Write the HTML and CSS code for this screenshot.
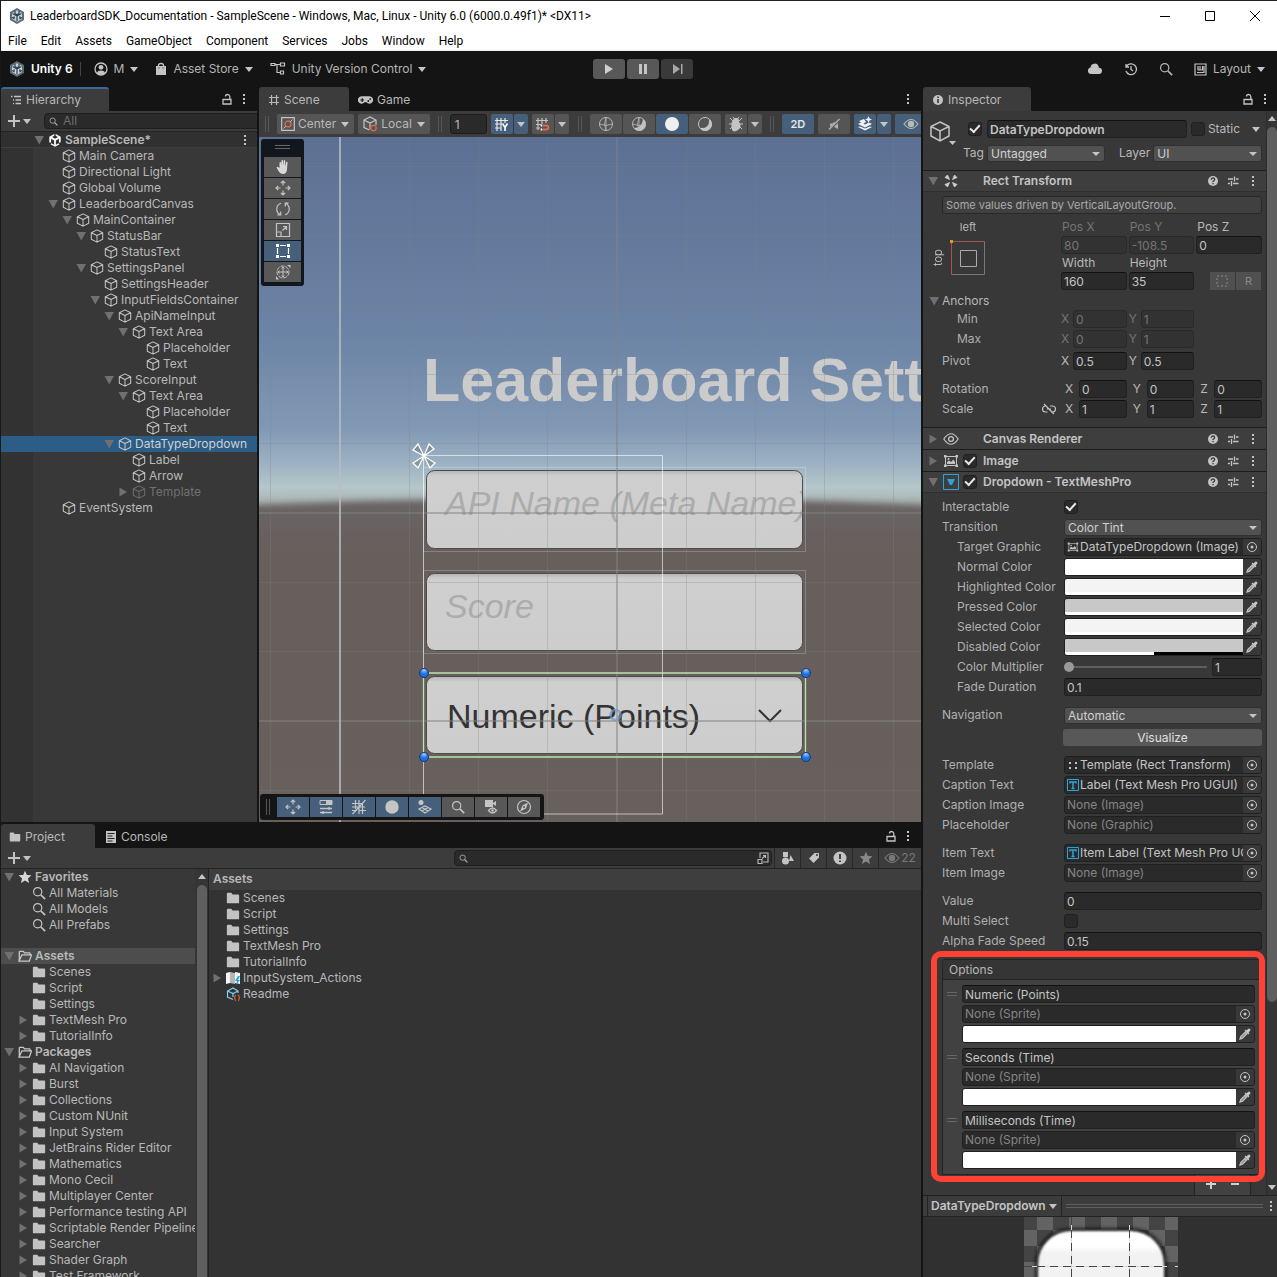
FILE: index.html
```html
<!DOCTYPE html>
<html lang="en">
<head>
<meta charset="utf-8">
<meta name="viewport" content="width=device-width, initial-scale=1">
<title>LeaderboardSDK_Documentation - SampleScene</title>
<link rel="stylesheet" href="styles.css">
</head>
<body>
<svg class="defs" aria-hidden="true">
  <symbol id="unity" viewBox="0 0 16 16"><path d="M8 0l7 4v8l-7 4-7-4V4z" fill="#5d6b77"/><path d="M8 2.200l5 2.900v5.800L8 13.800l-5-2.900V5.100z" fill="#c9d3da"/><path d="M8 8v5M8 8L3.600 5.500M8 8l4.400-2.500M6 3v2.500L8 6.700l2-1.200V3M3 9.500l2 1 .3-2.200M13 9.500l-2 1-.3-2.200" fill="none" stroke="#33404c" stroke-width="1.200"/></symbol>
  <symbol id="scene" viewBox="0 0 16 16"><path d="M8.800 1l5.700 3.200v6.600h-2V6.700L9 8.600v4.700l3-1.700 1.200 1.200L8 15.700l-5.200-2.900L4 11.600l3 1.700V8.600L3.500 6.700v4.100h-2V4.200L7.200 1v2.200L4.700 4.700 8 6.600l3.300-1.900-2.500-1.500z" fill="#fff"/></symbol>
  <symbol id="cube" viewBox="0 0 16 16"><path d="M8 1l6.500 3.200v7.600L8 15l-6.500-3.200V4.200zM1.500 4.200L8 7.400l6.500-3.200M8 7.400V15" fill="none" stroke="currentColor" stroke-width="1.200" stroke-linejoin="round"/></symbol>
  <symbol id="down" viewBox="0 0 8 8"><path d="M0 2h8L4 7z" fill="currentColor"/></symbol>
  <symbol id="tri-d" viewBox="0 0 12 12"><path d="M1.500 2h9.500L6.250 10.500z" fill="#707070"/></symbol>
  <symbol id="tri-r" viewBox="0 0 12 12"><path d="M2.500 1.500v9L10 6z" fill="#707070"/></symbol>
  <symbol id="folder" viewBox="0 0 16 16"><path d="M1 3q0-1 1-1h4l1.500 2H14q1 0 1 1v8q0 1-1 1H2q-1 0-1-1z" fill="#c2c2c2"/></symbol>
  <symbol id="folder-o" viewBox="0 0 16 16"><path d="M1.500 13V3.500q0-.8.8-.8H6l1.500 1.800H13q.8 0 .8.800V7" fill="none" stroke="#c8c8c8" stroke-width="1.500"/><path d="M1.200 13.800L4.500 6.800h11l-2.600 7z" fill="none" stroke="#c8c8c8" stroke-width="1.400"/></symbol>
  <symbol id="mag" viewBox="0 0 16 16"><circle cx="6.500" cy="6.500" r="4.700" fill="none" stroke="currentColor" stroke-width="1.400"/><path d="M10 10l5 5" stroke="currentColor" stroke-width="2"/></symbol>
  <symbol id="star" viewBox="0 0 16 16"><path d="M8 .8l2.100 4.900 5.300.4-4 3.500 1.200 5.200L8 12l-4.600 2.800 1.200-5.200-4-3.500 5.300-.4z" fill="currentColor"/></symbol>
  <symbol id="lock" viewBox="0 0 12 14"><path d="M2 7.500h8v4.500H2z" fill="none" stroke="#c4c4c4" stroke-width="1.300"/><path d="M4.500 4.500Q4.500 2.500 6.500 2.500T8.800 4.500V7.500" fill="none" stroke="#c4c4c4" stroke-width="1.300"/></symbol>
  <symbol id="dots" viewBox="0 0 4 14"><path d="M1 2h2v2H1zM1 6h2v2H1zM1 10h2v2H1z" fill="#c4c4c4"/></symbol>
  <symbol id="plus" viewBox="0 0 12 12"><path d="M6 0v12M0 6h12" stroke="#c4c4c4" stroke-width="2"/></symbol>
  <symbol id="hier" viewBox="0 0 12 12"><path d="M1 2.500h1.500M4 2.500h7M3 6h1M5.500 6H11M3 9.500h1M5.500 9.500H11" stroke="#c4c4c4" stroke-width="1.300"/></symbol>
  <symbol id="hash" viewBox="0 0 12 12"><path d="M1 3.500h10M1 8.500h10M3.500 1v10M8.500 1v10" stroke="currentColor" stroke-width="1.200"/></symbol>
  <symbol id="pad" viewBox="0 0 16 12"><path d="M4 2h8a4 4 0 1 1-3 6.500H7A4 4 0 1 1 4 2z" fill="#c4c4c4"/><path d="M2.500 6h4M4.500 4v4" stroke="#141414" stroke-width="1.200"/><circle cx="11" cy="7" r="1" fill="#141414"/><circle cx="13" cy="5" r="1" fill="#141414"/></symbol>
  <symbol id="popout" viewBox="0 0 12 12"><path d="M3 6V1h8v9H6M1 7.500h4v4H1zM5 6.500L8.500 3.500M6 3.500h2.500V6" fill="none" stroke="currentColor" stroke-width="1.100"/></symbol>
  <symbol id="help" viewBox="0 0 12 12"><circle cx="6" cy="6" r="5" fill="#c4c4c4"/><path d="M4.300 4.700Q4.300 3 6 3t1.700 1.600Q7.700 5.500 6 6.300V7" fill="none" stroke="#3e3e3e" stroke-width="1.300"/><path d="M5.300 8h1.400v1.300H5.300z" fill="#3e3e3e"/></symbol>
  <symbol id="preset" viewBox="0 0 12 12"><path d="M1 4h5M9 4h2.500M1 8.500h2M6 8.500h5.500M7.500 1.500v5M4.500 6v5" stroke="#c4c4c4" stroke-width="1.300"/></symbol>
  <symbol id="target" viewBox="0 0 12 12"><circle cx="6" cy="6" r="4.500" fill="none" stroke="#c4c4c4"/><circle cx="6" cy="6" r="1.500" fill="#c4c4c4"/></symbol>
  <symbol id="drop" viewBox="0 0 12 12"><path d="M1 11l.8-2.500L6 4.300l1.700 1.700L3.500 10.200z" fill="#8a8a8a" stroke="#c4c4c4" stroke-width="1.200"/><path d="M5.500 2.800l3.700 3.700 1.200-1.200-.8-.8 1.600-1.700q.6-1-.2-1.900t-1.800-.2L7.500 2.400l-.8-.8z" fill="#c8c8c8"/></symbol>
  <symbol id="rect-tf" viewBox="0 0 14 14"><path d="M3.500 1L5.500 5.500 1 3.500zM10.500 1L8.500 5.500 13 3.500zM3.500 13L5.500 8.500 1 10.500zM10.500 13L8.500 8.500 13 10.500z" fill="#d0d0d0" stroke="#d0d0d0" stroke-width=".8"/></symbol>
  <symbol id="eye" viewBox="0 0 16 12"><path d="M.8 6q7.200-10.500 14.400 0-7.200 10.500-14.400 0z" fill="none" stroke="currentColor" stroke-width="1.200"/><circle cx="8" cy="6" r="2.400" fill="none" stroke="currentColor" stroke-width="1.300"/></symbol>
  <symbol id="eye-f" viewBox="0 0 16 12"><path d="M1 6q7-9 14 0-7 9-14 0z" fill="none" stroke="currentColor" stroke-width="1.200"/><circle cx="8" cy="6" r="3.200" fill="currentColor"/></symbol>
  <symbol id="image" viewBox="0 0 16 14"><path d="M3 2.500h10M3 11.500h10M2.500 3v8M13.500 3v8" stroke="#c4c4c4"/><path d="M1 1h2.500v2.500H1zM12.500 1H15v2.500h-2.500zM1 10.500h2.500V13H1zM12.500 10.500H15V13h-2.500zM4 10V8l2-1.500L8 8l2.500-2.500L12 8v2z" fill="#c4c4c4"/><circle cx="5.500" cy="5" r="1" fill="#c4c4c4"/></symbol>
  <symbol id="tmp-t" viewBox="0 0 12 14"><path d="M.5 1.500h11v11H.5z" fill="none" stroke="#28a6dc"/><path d="M3 5.500V4h6v1.500M6 4v6.500M4.500 10.500h3" fill="none" stroke="#28a6dc" stroke-width="1.500"/></symbol>
  <symbol id="move" viewBox="0 0 16 16"><path d="M8 1v4.500M8 10.500V15M1 8h4.500M10.500 8H15M5.800 3.200L8 1l2.200 2.200M5.800 12.800L8 15l2.200-2.200M3.200 5.800L1 8l2.200 2.200M12.800 5.800L15 8l-2.200 2.200" fill="none" stroke="currentColor" stroke-width="1.200"/></symbol>
  <symbol id="globe" viewBox="0 0 16 16"><circle cx="8" cy="8" r="6.500" fill="none" stroke="currentColor"/><path d="M1.500 8q6.500 3 13 0M8 1.500q-3 6.500 0 13M8 1.500v13" fill="none" stroke="currentColor" stroke-width=".8"/></symbol>
</svg>

<header class="titlebar">
  <svg width="16" height="16"><use href="#unity"/></svg>
  <h1>LeaderboardSDK_Documentation - SampleScene - Windows, Mac, Linux - Unity 6.0 (6000.0.49f1)* &lt;DX11&gt;</h1>
  <button aria-label="Minimize"><svg width="10" height="10"><path d="M0 5.500h10" stroke="#000"/></svg></button>
  <button aria-label="Maximize"><svg width="10" height="10"><path d="M.5.500h9v9h-9z" fill="none" stroke="#000"/></svg></button>
  <button aria-label="Close"><svg width="10" height="10"><path d="M0 0l10 10M10 0L0 10" stroke="#000"/></svg></button>
</header>
<nav class="menubar"><button>File</button><button>Edit</button><button>Assets</button><button>GameObject</button><button>Component</button><button>Services</button><button>Jobs</button><button>Window</button><button>Help</button></nav>

<div class="topbar">
  <div class="top-left">
    <span class="brand"><svg width="16" height="18"><use href="#unity"/></svg>Unity 6</span>
    <button class="flat"><svg width="14" height="14" viewBox="0 0 14 14"><circle cx="7" cy="7" r="6" fill="none" stroke="#c4c4c4" stroke-width="1.300"/><circle cx="7" cy="5.300" r="2.400" fill="#c4c4c4"/><path d="M3 11.500q0-3 4-3t4 3Q7 14.500 3 11.500z" fill="#c4c4c4"/></svg>M<svg class="caret"><use href="#down"/></svg></button>
    <button class="flat"><svg width="12" height="14" viewBox="0 0 12 14"><path d="M1 4h10v9H1z" fill="#c4c4c4"/><path d="M3.500 6V3.500Q3.500 1.500 6 1.500t2.500 2V6" fill="none" stroke="#c4c4c4" stroke-width="1.300"/><path d="M4 5.500v1M8 5.500v1" stroke="#222"/></svg>Asset Store<svg class="caret"><use href="#down"/></svg></button>
    <button class="flat"><svg width="16" height="14" viewBox="0 0 16 14"><path d="M1 1.500h4v2H1zM10.500 1h4v3h-4zM10.500 9h3v3h-3z" fill="none" stroke="#c4c4c4" stroke-width="1.200"/><path d="M5 2.500h5M7 2.500V10.500h3" fill="none" stroke="#c4c4c4" stroke-width="1.200"/></svg>Unity Version Control<svg class="caret"><use href="#down"/></svg></button>
  </div>
  <div class="play">
    <button aria-label="Play"><svg width="10" height="12"><path d="M1 1v10l8-5z" fill="#d0d0d0"/></svg></button>
    <button aria-label="Pause"><svg width="10" height="12"><path d="M1 1h3v10H1zM6 1h3v10H6z" fill="#c4c4c4"/></svg></button>
    <button aria-label="Step" disabled><svg width="11" height="12"><path d="M1 1v10l7-5zM9 1h1.500v10H9z" fill="#a8a8a8"/></svg></button>
  </div>
  <div class="top-right">
    <button class="flat" aria-label="Cloud"><svg width="16" height="14" viewBox="0 0 16 14"><path d="M4 12a3.300 3.300 0 0 1-.5-6.500A4.200 4.200 0 0 1 11.500 4q.5 1 .3 1.800A3.100 3.100 0 0 1 12 12z" fill="#c4c4c4"/></svg></button>
    <button class="flat" aria-label="Undo history"><svg width="14" height="14" viewBox="0 0 14 14"><path d="M2 2v3h3M2.300 4.700A5.400 5.400 0 1 1 2 9M7 4v3.500L9 9" fill="none" stroke="#c4c4c4" stroke-width="1.300"/></svg></button>
    <button class="flat" aria-label="Search"><svg width="14" height="14"><use href="#mag"/></svg></button>
    <button class="flat"><svg width="13" height="13" viewBox="0 0 13 13"><path d="M1 1h11v11H1zM4 3v4M6 3v4M8.500 3v4M3.500 7h5.500M3 9.500h7M10 3v7" fill="none" stroke="#c4c4c4" stroke-width="1.200"/></svg>Layout<svg class="caret"><use href="#down"/></svg></button>
  </div>
</div>

<main class="editor">
  <section class="work">
    <div class="upper">
      <section class="panel hierarchy" aria-label="Hierarchy">
        <div class="tabs">
          <button class="tab active focus w108"><svg width="12" height="12"><use href="#hier"/></svg>Hierarchy</button>
          <span class="tab-tools"><svg width="12" height="14"><use href="#lock"/></svg><svg width="4" height="14"><use href="#dots"/></svg></span>
        </div>
        <div class="toolbar">
          <button class="add" aria-label="Create"><svg width="12" height="12"><use href="#plus"/></svg><svg class="caret"><use href="#down"/></svg></button>
          <label class="search"><svg width="9" height="9"><use href="#mag"/></svg><input type="text" placeholder="All" aria-label="Search hierarchy"><svg width="12" height="12"><use href="#popout"/></svg></label>
        </div>
        <ul class="tree">
          <li class="d0 root"><svg class="tw"><use href="#tri-d"/></svg><svg class="ic"><use href="#scene"/></svg><b>SampleScene*</b><svg class="end" width="4" height="14"><use href="#dots"/></svg></li>
          <li class="d1"><i class="tw"></i><svg class="ic"><use href="#cube"/></svg>Main Camera</li>
          <li class="d1"><i class="tw"></i><svg class="ic"><use href="#cube"/></svg>Directional Light</li>
          <li class="d1"><i class="tw"></i><svg class="ic"><use href="#cube"/></svg>Global Volume</li>
          <li class="d1"><svg class="tw"><use href="#tri-d"/></svg><svg class="ic"><use href="#cube"/></svg>LeaderboardCanvas</li>
          <li class="d2"><svg class="tw"><use href="#tri-d"/></svg><svg class="ic"><use href="#cube"/></svg>MainContainer</li>
          <li class="d3"><svg class="tw"><use href="#tri-d"/></svg><svg class="ic"><use href="#cube"/></svg>StatusBar</li>
          <li class="d4"><i class="tw"></i><svg class="ic"><use href="#cube"/></svg>StatusText</li>
          <li class="d3"><svg class="tw"><use href="#tri-d"/></svg><svg class="ic"><use href="#cube"/></svg>SettingsPanel</li>
          <li class="d4"><i class="tw"></i><svg class="ic"><use href="#cube"/></svg>SettingsHeader</li>
          <li class="d4"><svg class="tw"><use href="#tri-d"/></svg><svg class="ic"><use href="#cube"/></svg>InputFieldsContainer</li>
          <li class="d5"><svg class="tw"><use href="#tri-d"/></svg><svg class="ic"><use href="#cube"/></svg>ApiNameInput</li>
          <li class="d6"><svg class="tw"><use href="#tri-d"/></svg><svg class="ic"><use href="#cube"/></svg>Text Area</li>
          <li class="d7"><i class="tw"></i><svg class="ic"><use href="#cube"/></svg>Placeholder</li>
          <li class="d7"><i class="tw"></i><svg class="ic"><use href="#cube"/></svg>Text</li>
          <li class="d5"><svg class="tw"><use href="#tri-d"/></svg><svg class="ic"><use href="#cube"/></svg>ScoreInput</li>
          <li class="d6"><svg class="tw"><use href="#tri-d"/></svg><svg class="ic"><use href="#cube"/></svg>Text Area</li>
          <li class="d7"><i class="tw"></i><svg class="ic"><use href="#cube"/></svg>Placeholder</li>
          <li class="d7"><i class="tw"></i><svg class="ic"><use href="#cube"/></svg>Text</li>
          <li class="d5 selected"><svg class="tw"><use href="#tri-d"/></svg><svg class="ic"><use href="#cube"/></svg>DataTypeDropdown</li>
          <li class="d6"><i class="tw"></i><svg class="ic"><use href="#cube"/></svg>Label</li>
          <li class="d6"><i class="tw"></i><svg class="ic"><use href="#cube"/></svg>Arrow</li>
          <li class="d6 off"><svg class="tw"><use href="#tri-r"/></svg><svg class="ic"><use href="#cube"/></svg>Template</li>
          <li class="d1"><i class="tw"></i><svg class="ic"><use href="#cube"/></svg>EventSystem</li>
        </ul>
      </section>

      <section class="panel scene" aria-label="Scene">
        <div class="tabs">
          <button class="tab active w90"><svg width="12" height="12"><use href="#hash"/></svg>Scene</button>
          <button class="tab"><svg width="15" height="12"><use href="#pad"/></svg>Game</button>
          <span class="tab-tools"><svg width="4" height="14"><use href="#dots"/></svg></span>
        </div>
        <div class="scene-bar">
          <i class="grip"></i>
          <button class="tb"><svg width="14" height="14" viewBox="0 0 14 14"><path d="M.7.700h12.600v12.600H.7z" fill="none" stroke="#c4c4c4" stroke-width="1.200"/><circle cx="7" cy="7" r="3" fill="none" stroke="#d8694b" stroke-width="1.300"/><path d="M2.500 11.500L5 9M9 5l2.500-2.500" stroke="#c4c4c4"/></svg>Center<svg class="caret"><use href="#down"/></svg></button>
          <button class="tb"><svg width="16" height="16" viewBox="0 0 16 16"><path d="M7.500 14L2 11.500V4l6-3 6 3v5M2 4l6 3 6-3M8 7v6" fill="none" stroke="#c4c4c4" stroke-width="1.200"/><circle cx="11.500" cy="12" r="2.700" fill="none" stroke="#d8694b" stroke-width="1.300"/></svg>Local<svg class="caret"><use href="#down"/></svg></button>
          <i class="grip"></i>
          <input class="num" type="text" value="1" aria-label="Grid size">
          <span class="pair"><button class="tb on w22" aria-label="Grid"><svg width="15" height="15" viewBox="0 0 15 15"><path d="M1 3.500h13M1 7h7M1 11h6M3 1v13M7 1v13M11 1v5" stroke="#e8e8e8" stroke-width="1.200"/><path d="M8.500 6.500l2.500 4 2.500-4M11 10v4" fill="none" stroke="#fff" stroke-width="1.600"/></svg></button><button class="tb on w14" aria-label="Grid options"><svg class="caret"><use href="#down"/></svg></button></span>
          <span class="pair"><button class="tb w22" aria-label="Snap"><svg width="15" height="15" viewBox="0 0 15 15"><path d="M1 3.500h12M1 7.500h5M1 11h4M3 1v12M7 1v6M11 1v5" stroke="#c4c4c4" stroke-width="1.200"/><path d="M8 8.500h3q2.500 0 2.500 2t-2.500 2H8" fill="none" stroke="#e06a4a" stroke-width="1.800"/><path d="M6.500 7.500v2M6.500 11.500v2" stroke="#fff" stroke-width="1.600"/></svg></button><button class="tb w14" aria-label="Snap options"><svg class="caret"><use href="#down"/></svg></button></span>
          <i class="grip wide"></i>
          <span class="pair">
            <button class="tb w32" aria-label="Wireframe"><svg width="16" height="16"><use href="#globe"/></svg></button>
            <button class="tb w32" aria-label="Shaded wireframe"><svg width="16" height="16"><path d="M12 3a6.500 6.500 0 1 1-9 9q8 0 9-9z" fill="#c4c4c4"/><use href="#globe"/></svg></button>
            <button class="tb on w32" aria-label="Unlit"><svg width="16" height="16"><circle cx="8" cy="8" r="7" fill="#efefef"/></svg></button>
            <button class="tb w32" aria-label="Shaded"><svg width="16" height="16"><circle cx="8" cy="8" r="6.500" fill="none" stroke="#c4c4c4"/><path d="M12 3a6.500 6.500 0 1 1-9 9q10 1 9-9z" fill="#c4c4c4"/></svg></button>
          </span>
          <span class="pair"><button class="tb w22" aria-label="Debug draw"><svg width="16" height="16" viewBox="0 0 16 16"><path d="M5 5q0-3 3-3t3 3v1q1.500 1 1.500 4T8 15t-4.500-5T5 6z" fill="#c4c4c4"/><path d="M2 2l3 3M14 2l-3 3M1 8h14M2 13l3-3M14 13l-3-3M5 1l1.500 2M11 1L9.500 3" stroke="#c4c4c4"/></svg></button><button class="tb w14" aria-label="Debug options"><svg class="caret"><use href="#down"/></svg></button></span>
          <i class="grip"></i>
          <button class="tb on w32 two">2D</button>
          <button class="tb w32" aria-label="Audio"><svg width="14" height="14"><path d="M2 12.500L12.500 2" stroke="#b0b0b0" stroke-width="1.400"/><path d="M7 10l4-4v6zM3 6.500h2.500l2-2v2L4 9.500H3z" fill="#b0b0b0"/></svg></button>
          <span class="pair"><button class="tb on w22" aria-label="Effects"><svg width="16" height="16"><path d="M1 8l3-1.500 4 2 4-2L15 8l-7 3.500zM1 11l7 3.500 7-3.500-2-.5-5 2-5-2zM2 5l5-2 2 3-3 2zM11.500 0l1 2.500L15 3.500l-2.500 1-1 2.500-1-2.500-2.500-1 2.500-1z" fill="#f0f0f0"/></svg></button><button class="tb on w14" aria-label="Effects options"><svg class="caret"><use href="#down"/></svg></button></span>
          <button class="tb on w32" aria-label="Visibility"><svg width="16" height="12"><use href="#eye-f"/></svg></button>
        </div>

        <div class="viewport">
          <svg class="world" width="100%" height="100%" role="img" aria-label="Scene view">
            <defs>
              <linearGradient id="sky" gradientUnits="userSpaceOnUse" x1="0" y1="0" x2="0" y2="365">
                <stop offset="0" stop-color="#5c7093"/><stop offset=".55" stop-color="#6c84a5"/><stop offset=".8" stop-color="#8299b5"/><stop offset=".9" stop-color="#9eb3c4"/><stop offset=".96" stop-color="#b5c7ca"/><stop offset="1" stop-color="#a9b4b4"/>
              </linearGradient>
              <linearGradient id="ground" gradientUnits="userSpaceOnUse" x1="0" y1="360" x2="0" y2="685">
                <stop offset="0" stop-color="#6a6465"/><stop offset=".2" stop-color="#665f5b"/><stop offset="1" stop-color="#67605b"/>
              </linearGradient>
              <linearGradient id="box" x1="0" y1="0" x2="0" y2="1"><stop offset="0" stop-color="#b4b4b4"/><stop offset=".07" stop-color="#cfcfcf"/><stop offset="1" stop-color="#cdcdcd"/></linearGradient>
              <radialGradient id="knob" cx=".5" cy=".15" r=".8"><stop offset="0" stop-color="#a8ccff"/><stop offset=".6" stop-color="#1f6fe0"/></radialGradient>
              <filter id="soft" x="-5%" y="-5%" width="110%" height="110%"><feGaussianBlur stdDeviation="0 3"/></filter>
              <clipPath id="field"><path d="M168 334h375v77H168z"/></clipPath>
            </defs>
            <rect width="100%" height="100%" fill="url(#sky)"/>
            <path d="M-60 370Q331 352 722 370L4000 520V4000H-60z" fill="url(#ground)" filter="url(#soft)"/>
            <text class="heading" x="164" y="264">Leaderboard Sett</text>
            <g fill="url(#box)" stroke="#4c4a4a">
              <rect x="167.500" y="333.500" width="376" height="78" rx="8"/><rect x="167.500" y="436.500" width="376" height="77" rx="8"/><rect x="167.500" y="539.500" width="376" height="77" rx="8"/>
            </g>
            <g clip-path="url(#field)"><text class="hint" x="186" y="378">API Name (Meta Name)</text></g>
            <text class="hint" x="186" y="481">Score</text>
            <text class="value" x="188" y="591">Numeric (Points)</text>
            <path d="M500 573l11 11 11-11" fill="none" stroke="#333" stroke-width="2"/>
            <g stroke="#828282" stroke-opacity=".28">
              <path d="M11.500 0v685M150.500 0v685M219.500 0v685M288.500 0v685M427.500 0v685M496.500 0v685M565.500 0v685M634.500 0v685M0 29.500h3000M0 98.500h3000M0 168.500h3000M0 237.500h3000M0 306.500h3000M0 445.500h3000M0 514.500h3000M0 653.500h3000"/>
              <path d="M358 0v685M0 376h3000M0 584h3000" stroke-width="2" stroke-opacity=".5"/>
            </g>
            <path d="M81 0v4000" stroke="#b9bcc2" stroke-width="2" stroke-opacity=".8"/>
            <g fill="none" stroke="#fff">
              <path d="M164.500 318.500H403.500V677H164.500z" stroke-opacity=".6"/>
              <path d="M164.500 330.500h382v84h-382zM164.500 433.500h382v83h-382z" stroke-opacity=".22"/>
              <path d="M164.500 536h382v84h-382z" stroke="#b9e3b4" stroke-width="1.300"/>
            </g>
            <g fill="#6b6b6b" fill-opacity=".4" stroke="#fff" stroke-width="1.300"><path d="M165 319l-11-6 5-6zM165 319l5-12 5 5zM165 319l11 7-5 5zM165 319l-6 12-5-5z"/></g>
            <circle cx="356.500" cy="578" r="5" fill="none" stroke="#6f9ac4" stroke-width="2.500" stroke-opacity=".7"/>
            <g fill="url(#knob)" stroke="#17396b"><circle cx="165" cy="536" r="4.500"/><circle cx="547" cy="536" r="4.500"/><circle cx="165" cy="620" r="4.500"/><circle cx="547" cy="620" r="4.500"/></g>
          </svg>
          <div class="tools">
            <i class="bar"></i>
            <button aria-label="View"><svg width="16" height="16"><path d="M4.500 9V3.500q.7-1 1.500 0V7l.5-5.500q.8-.8 1.500 0V7l.7-5.500q.9-.8 1.500 0V7.500l1-4.500q.9-.6 1.400.2L12 10q0 5-4.500 5Q5 15 3.500 12L1.500 8.500q.6-1.200 1.800-.3z" fill="#d8d8d8"/></svg></button>
            <button aria-label="Move"><svg width="16" height="16"><use href="#move"/></svg></button>
            <button aria-label="Rotate"><svg width="16" height="16"><path d="M6 2.200A6 6 0 0 0 5.500 13.500M10 13.800A6 6 0 0 0 10.500 2.500M2.500 13.800h3.200v-3.300M13.500 2.200h-3.200v3.300" fill="none" stroke="currentColor" stroke-width="1.200"/></svg></button>
            <button aria-label="Scale"><svg width="16" height="16"><path d="M1.500 1.500h13v13h-13zM1.500 10h4.500v4.500M7.500 8.500l4-4M8 4.500h3.500V8" fill="none" stroke="currentColor" stroke-width="1.200"/></svg></button>
            <button class="on" aria-label="Rect"><svg width="16" height="16"><path d="M5 2.500h6M5 13.500h6M2.500 5v6M13.500 5v6" stroke="#fff" stroke-width="1.200"/><path d="M1 1h3v3H1zM12 1h3v3h-3zM1 12h3v3H1zM12 12h3v3h-3z" fill="#fff"/></svg></button>
            <button aria-label="Transform"><svg width="16" height="16"><circle cx="8" cy="8" r="6" fill="none" stroke="currentColor" stroke-dasharray="4 1"/><path d="M8 3v10M3 8h10M6.500 4.500L8 3l1.500 1.500M6.500 11.500L8 13l1.500-1.500M4.500 6.500L3 8l1.500 1.500M11.500 6.500L13 8l-1.500 1.500" fill="none" stroke="currentColor"/><path d="M12 1h3.500v3zM1 12v3.500h3z" fill="currentColor"/></svg></button>
          </div>
          <div class="dock">
            <i class="grip"></i>
            <button class="on" aria-label="Tools"><svg width="16" height="16"><use href="#move"/></svg></button>
            <button class="on" aria-label="Tool settings"><svg width="16" height="16"><path d="M2 1.500h12v4H2z" fill="none" stroke="currentColor"/><path d="M8 1h6v5H8z" fill="currentColor"/><path d="M2 9.500h12M2 13.500h12M11 8v3M5 12v3" stroke="currentColor" stroke-width="1.300"/></svg></button>
            <button class="on" aria-label="Grid and snap"><svg width="16" height="16"><path d="M1 4.500h10M1 8h13M1 11.500h5M8 11.500h7M4.500 1v9M8 1v14M11.500 4v11M1.500 15L14.500 1" stroke="currentColor" stroke-width="1.200"/></svg></button>
            <button class="on" aria-label="Draw modes"><svg width="16" height="16"><circle cx="8" cy="8" r="6.700" fill="currentColor"/></svg></button>
            <button class="on" aria-label="View options"><svg width="16" height="16"><circle cx="4" cy="3.500" r="2.500" fill="currentColor"/><path d="M2 10l6-3 6 3-6 4zM5 8.500l6 3.500M11 8.500L5 12" fill="none" stroke="currentColor" stroke-width="1.200"/></svg></button>
            <button aria-label="Search"><svg width="14" height="14"><use href="#mag"/></svg></button>
            <button aria-label="Cameras"><svg width="16" height="16"><path d="M2 1h8v7H2zM10 4l3-2v5l-3-2z" fill="currentColor"/><path d="M5.500 11.500q4-5 8 0-4 5-8 0z" fill="#585858" stroke="currentColor" stroke-width="1.300"/><circle cx="9.500" cy="11.500" r="1.300" fill="currentColor"/></svg></button>
            <button aria-label="Navigation"><svg width="16" height="16"><circle cx="8" cy="8" r="6.500" fill="none" stroke="currentColor" stroke-width="1.200"/><path d="M12 3.500l-2 6-6 3 2.500-6z" fill="currentColor"/><circle cx="8" cy="8" r="1" fill="#585858"/></svg></button>
          </div>
        </div>
      </section>
    </div>

    <section class="panel project" aria-label="Project">
      <div class="tabs">
        <button class="tab active w94"><svg width="12" height="12"><use href="#folder"/></svg>Project</button>
        <button class="tab console"><svg width="12" height="12"><path d="M1 0h10v12H1z" fill="#c4c4c4"/><path d="M2.500 2.500h7M2.500 5h5M2.500 7.500h7M2.500 10h5" stroke="#222"/></svg>Console</button>
        <span class="tab-tools"><svg width="12" height="14"><use href="#lock"/></svg><svg width="4" height="14"><use href="#dots"/></svg></span>
      </div>
      <div class="toolbar">
        <button class="add" aria-label="Create"><svg width="12" height="12"><use href="#plus"/></svg><svg class="caret"><use href="#down"/></svg></button>
        <label class="search wide"><svg width="9" height="9"><use href="#mag"/></svg><input type="text" aria-label="Search project"><svg width="12" height="12"><use href="#popout"/></svg></label>
        <button class="cell" aria-label="Filter by type"><svg width="13" height="13"><path d="M2 0h5v5H2zM9.500 3l3.500 6H8z" fill="#c4c4c4"/><circle cx="4.500" cy="9" r="3.500" fill="#c4c4c4"/></svg></button>
        <button class="cell" aria-label="Filter by label"><svg width="12" height="12"><path d="M6.500 1L11 1v4.500L5.500 11 1 6.500z" fill="#c4c4c4"/><circle cx="9" cy="3" r="1" fill="#333"/></svg></button>
        <button class="cell" aria-label="Filter by import log"><svg width="14" height="14"><circle cx="7" cy="7" r="6.500" fill="#c4c4c4"/><path d="M6.200 3h1.600v5H6.200zM6.200 9.500h1.600V11H6.200z" fill="#222"/></svg></button>
        <button class="cell dim" aria-label="Save search"><svg width="14" height="14"><use href="#star"/></svg></button>
        <button class="cell hid"><svg width="16" height="12"><use href="#eye-f"/></svg>22</button>
      </div>
      <div class="browser">
        <ul class="tree folders">
          <li class="d0"><svg class="tw"><use href="#tri-d"/></svg><svg class="ic bright"><use href="#star"/></svg><b>Favorites</b></li>
          <li class="d1"><i class="tw"></i><svg class="ic"><use href="#mag"/></svg>All Materials</li>
          <li class="d1"><i class="tw"></i><svg class="ic"><use href="#mag"/></svg>All Models</li>
          <li class="d1 last"><i class="tw"></i><svg class="ic"><use href="#mag"/></svg>All Prefabs</li>
          <li class="d0 current"><svg class="tw"><use href="#tri-d"/></svg><svg class="ic"><use href="#folder-o"/></svg><b>Assets</b></li>
          <li class="d1"><i class="tw"></i><svg class="ic"><use href="#folder"/></svg>Scenes</li>
          <li class="d1"><i class="tw"></i><svg class="ic"><use href="#folder"/></svg>Script</li>
          <li class="d1"><i class="tw"></i><svg class="ic"><use href="#folder"/></svg>Settings</li>
          <li class="d1"><svg class="tw"><use href="#tri-r"/></svg><svg class="ic"><use href="#folder"/></svg>TextMesh Pro</li>
          <li class="d1"><svg class="tw"><use href="#tri-r"/></svg><svg class="ic"><use href="#folder"/></svg>TutorialInfo</li>
          <li class="d0"><svg class="tw"><use href="#tri-d"/></svg><svg class="ic"><use href="#folder-o"/></svg><b>Packages</b></li>
          <li class="d1"><svg class="tw"><use href="#tri-r"/></svg><svg class="ic"><use href="#folder"/></svg>AI Navigation</li>
          <li class="d1"><svg class="tw"><use href="#tri-r"/></svg><svg class="ic"><use href="#folder"/></svg>Burst</li>
          <li class="d1"><svg class="tw"><use href="#tri-r"/></svg><svg class="ic"><use href="#folder"/></svg>Collections</li>
          <li class="d1"><svg class="tw"><use href="#tri-r"/></svg><svg class="ic"><use href="#folder"/></svg>Custom NUnit</li>
          <li class="d1"><svg class="tw"><use href="#tri-r"/></svg><svg class="ic"><use href="#folder"/></svg>Input System</li>
          <li class="d1"><svg class="tw"><use href="#tri-r"/></svg><svg class="ic"><use href="#folder"/></svg>JetBrains Rider Editor</li>
          <li class="d1"><svg class="tw"><use href="#tri-r"/></svg><svg class="ic"><use href="#folder"/></svg>Mathematics</li>
          <li class="d1"><svg class="tw"><use href="#tri-r"/></svg><svg class="ic"><use href="#folder"/></svg>Mono Cecil</li>
          <li class="d1"><svg class="tw"><use href="#tri-r"/></svg><svg class="ic"><use href="#folder"/></svg>Multiplayer Center</li>
          <li class="d1"><svg class="tw"><use href="#tri-r"/></svg><svg class="ic"><use href="#folder"/></svg>Performance testing API</li>
          <li class="d1"><svg class="tw"><use href="#tri-r"/></svg><svg class="ic"><use href="#folder"/></svg>Scriptable Render Pipeline</li>
          <li class="d1"><svg class="tw"><use href="#tri-r"/></svg><svg class="ic"><use href="#folder"/></svg>Searcher</li>
          <li class="d1"><svg class="tw"><use href="#tri-r"/></svg><svg class="ic"><use href="#folder"/></svg>Shader Graph</li>
          <li class="d1"><svg class="tw"><use href="#tri-r"/></svg><svg class="ic"><use href="#folder"/></svg>Test Framework</li>
        </ul>
        <div class="scroll"><svg class="caret up"><use href="#down"/></svg><i></i></div>
        <div class="files">
          <h2>Assets</h2>
          <ul class="tree">
            <li class="d0"><i class="tw"></i><svg class="ic"><use href="#folder"/></svg>Scenes</li>
            <li class="d0"><i class="tw"></i><svg class="ic"><use href="#folder"/></svg>Script</li>
            <li class="d0"><i class="tw"></i><svg class="ic"><use href="#folder"/></svg>Settings</li>
            <li class="d0"><i class="tw"></i><svg class="ic"><use href="#folder"/></svg>TextMesh Pro</li>
            <li class="d0"><i class="tw"></i><svg class="ic"><use href="#folder"/></svg>TutorialInfo</li>
            <li class="d0"><svg class="tw"><use href="#tri-r"/></svg><svg class="ic" viewBox="0 0 14 14"><path d="M0 2l4-1v11l-4 1zM9 1l5 1v11l-5-1z" fill="#f4f4f4"/><path d="M4 1l5 1v11l-5-1z" fill="#b5b5b5"/><path d="M12 5l-3 5h2l-1 4 4-5h-2l2-4z" fill="#1fa5dc"/></svg>InputSystem_Actions</li>
            <li class="d0"><i class="tw"></i><svg class="ic" viewBox="0 0 14 14"><path d="M7 12.500L1.500 10V4L7 1l5 3v2M1.500 4L7 6.500 12 4M7 6.500V10" fill="none" stroke="#7fd0f2" stroke-width="1.200"/><path d="M10 8q-1 0-1 1.300T8 10.700q1 0 1 1.400t1 1.400M12 8q1 0 1 1.300t1 1.400q-1 0-1 1.400t-1 1.400" fill="none" stroke="#e4613c" stroke-width="1.100"/></svg>Readme</li>
          </ul>
        </div>
      </div>
    </section>
  </section>

  <aside class="panel inspector" aria-label="Inspector">
    <div class="tabs">
      <button class="tab active w108"><svg width="12" height="12"><circle cx="6" cy="6" r="5" fill="#c4c4c4"/><path d="M5.200 2.500h1.600V4H5.200zM5.200 5h1.600v4H5.200z" fill="#333"/></svg>Inspector</button>
      <span class="tab-tools"><svg width="12" height="14"><use href="#lock"/></svg><svg width="4" height="14"><use href="#dots"/></svg></span>
    </div>
    <div class="insp-scroll">
      <div class="insp">
        <div class="object">
          <svg class="big" width="28" height="28" viewBox="0 0 28 28"><path d="M12 5l9 4.500v9.500L12 24l-9-5V9.500zM3 9.500l9 4.500 9-4.500M12 14v10" fill="none" stroke="#c4c4c4" stroke-width="1.500"/><path d="M21 24h7l-3.500 4z" fill="#c4c4c4"/></svg>
          <div class="object-name"><input type="checkbox" checked aria-label="Active"><input class="f bold" type="text" value="DataTypeDropdown" aria-label="Name"><label class="static"><input type="checkbox">Static</label><svg class="caret"><use href="#down"/></svg></div>
          <div class="object-tag"><label for="tag">Tag</label><span class="sel"><select id="tag"><option>Untagged</option></select></span><label for="layer" class="layer">Layer</label><span class="sel grow"><select id="layer"><option>UI</option></select></span></div>
        </div>

        <div class="comp open"><svg class="tw"><use href="#tri-d"/></svg><svg class="cic" width="16" height="14"><use href="#rect-tf"/></svg><span class="chk"></span><h3>Rect Transform</h3><svg width="12" height="12"><use href="#help"/></svg><svg width="12" height="12"><use href="#preset"/></svg><svg width="4" height="14"><use href="#dots"/></svg></div>
        <div class="body rect">
          <p class="note">Some values driven by VerticalLayoutGroup.</p>
          <div class="placement">
            <button class="anchor" aria-label="Anchor presets"><span>left</span><span class="side">top</span><svg width="36" height="36"><path d="M1.500 1.500h33v33h-33z" fill="none" stroke="#777"/><path d="M34 1.500H1.500V34" fill="none" stroke="#a85252"/><path d="M10.500 10.500h16v16h-16z" fill="none" stroke="#aaa"/><path d="M0 0h3v3H0z" fill="#d0a020"/></svg></button>
            <div class="cells">
              <label class="disabled" for="px">Pos X</label><label class="disabled" for="py">Pos Y</label><label for="pz">Pos Z</label>
              <input id="px" class="f" value="80" disabled><input id="py" class="f" value="-108.5" disabled><input id="pz" class="f" value="0">
              <label for="w">Width</label><label for="h">Height</label><i></i>
              <input id="w" class="f" value="160"><input id="h" class="f" value="35">
              <span class="modes"><button aria-label="Blueprint mode"><svg width="12" height="12"><path d="M1 1h10v10H1z" fill="none" stroke="#8a8a8a" stroke-dasharray="2 2"/></svg></button><button>R</button></span>
            </div>
          </div>
          <div class="sub"><svg class="tw"><use href="#tri-d"/></svg>Anchors</div>
          <div class="row xyz near in"><span>Min</span><label class="disabled">X<input class="f" value="0" disabled></label><label class="disabled">Y<input class="f" value="1" disabled></label></div>
          <div class="row xyz near in"><span>Max</span><label class="disabled">X<input class="f" value="0" disabled></label><label class="disabled">Y<input class="f" value="1" disabled></label></div>
          <div class="row xyz near pivot"><span>Pivot</span><label>X<input class="f" value="0.5"></label><label>Y<input class="f" value="0.5"></label></div>
          <div class="row xyz"><span>Rotation</span><label>X<input class="f" value="0"></label><label>Y<input class="f" value="0"></label><label>Z<input class="f" value="0"></label></div>
          <div class="row xyz"><span class="link">Scale<svg width="14" height="12"><path d="M4.500 3h-1a3 3 0 0 0 0 6h2M9 9h1.500a3 3 0 0 0 0-6H8M5 6h4M2 1l10 10" fill="none" stroke="#c4c4c4" stroke-width="1.200"/></svg></span><label>X<input class="f" value="1"></label><label>Y<input class="f" value="1"></label><label>Z<input class="f" value="1"></label></div>
        </div>

        <div class="comp"><svg class="tw"><use href="#tri-r"/></svg><svg class="cic" width="16" height="12"><use href="#eye"/></svg><span class="chk"></span><h3>Canvas Renderer</h3><svg width="12" height="12"><use href="#help"/></svg><svg width="12" height="12"><use href="#preset"/></svg><svg width="4" height="14"><use href="#dots"/></svg></div>
        <div class="comp"><svg class="tw"><use href="#tri-r"/></svg><svg class="cic" width="16" height="14"><use href="#image"/></svg><span class="chk"><input type="checkbox" checked aria-label="Image enabled"></span><h3>Image</h3><svg width="12" height="12"><use href="#help"/></svg><svg width="12" height="12"><use href="#preset"/></svg><svg width="4" height="14"><use href="#dots"/></svg></div>
        <div class="comp open"><svg class="tw"><use href="#tri-d"/></svg><svg class="cic" width="16" height="16"><path d="M.5.500h15v15H.5z" fill="none" stroke="#28a6dc"/><path d="M4 5h8l-3 6H7z" fill="#28a6dc"/></svg><span class="chk"><input type="checkbox" checked aria-label="Dropdown enabled"></span><h3>Dropdown - TextMeshPro</h3><svg width="12" height="12"><use href="#help"/></svg><svg width="12" height="12"><use href="#preset"/></svg><svg width="4" height="14"><use href="#dots"/></svg></div>
        <div class="body">
          <div class="row"><label for="inter">Interactable</label><input id="inter" type="checkbox" checked></div>
          <div class="row"><label for="trans">Transition</label><span class="sel grow"><select id="trans"><option>Color Tint</option></select></span></div>
          <div class="row in"><span>Target Graphic</span><div class="obj"><svg width="12" height="12"><use href="#image"/></svg><em>DataTypeDropdown (Image)</em><button aria-label="Pick target graphic"><svg width="12" height="12"><use href="#target"/></svg></button></div></div>
          <div class="row in"><span>Normal Color</span><div class="color"><button class="sw white" aria-label="Normal color"></button><button class="pick" aria-label="Pick color"><svg width="12" height="12"><use href="#drop"/></svg></button></div></div>
          <div class="row in"><span>Highlighted Color</span><div class="color"><button class="sw light" aria-label="Highlighted color"></button><button class="pick" aria-label="Pick color"><svg width="12" height="12"><use href="#drop"/></svg></button></div></div>
          <div class="row in"><span>Pressed Color</span><div class="color"><button class="sw gray" aria-label="Pressed color"></button><button class="pick" aria-label="Pick color"><svg width="12" height="12"><use href="#drop"/></svg></button></div></div>
          <div class="row in"><span>Selected Color</span><div class="color"><button class="sw light" aria-label="Selected color"></button><button class="pick" aria-label="Pick color"><svg width="12" height="12"><use href="#drop"/></svg></button></div></div>
          <div class="row in"><span>Disabled Color</span><div class="color"><button class="sw gray half" aria-label="Disabled color"></button><button class="pick" aria-label="Pick color"><svg width="12" height="12"><use href="#drop"/></svg></button></div></div>
          <div class="row in"><label for="mult">Color Multiplier</label><input id="mult" type="range" min="1" max="5" value="1"><input class="f short" type="text" value="1" aria-label="Color multiplier value"></div>
          <div class="row in after"><label for="fade">Fade Duration</label><input id="fade" class="f" value="0.1"></div>
          <div class="row"><label for="nav">Navigation</label><span class="sel grow"><select id="nav"><option>Automatic</option></select></span></div>
          <div class="row vis"><button class="visualize">Visualize</button></div>
          <div class="row"><span>Template</span><div class="obj"><svg width="12" height="12"><path d="M2 3h2v2H2zM8 3h2v2H8zM2 8h2v2H2zM8 8h2v2H8z" fill="#c4c4c4"/></svg><em>Template (Rect Transform)</em><button aria-label="Pick template"><svg width="12" height="12"><use href="#target"/></svg></button></div></div>
          <div class="row"><span>Caption Text</span><div class="obj"><svg width="12" height="14"><use href="#tmp-t"/></svg><em>Label (Text Mesh Pro UGUI)</em><button aria-label="Pick caption text"><svg width="12" height="12"><use href="#target"/></svg></button></div></div>
          <div class="row"><span>Caption Image</span><div class="obj none"><em>None (Image)</em><button aria-label="Pick caption image"><svg width="12" height="12"><use href="#target"/></svg></button></div></div>
          <div class="row after"><span>Placeholder</span><div class="obj none"><em>None (Graphic)</em><button aria-label="Pick placeholder"><svg width="12" height="12"><use href="#target"/></svg></button></div></div>
          <div class="row"><span>Item Text</span><div class="obj"><svg width="12" height="14"><use href="#tmp-t"/></svg><em>Item Label (Text Mesh Pro UGUI)</em><button aria-label="Pick item text"><svg width="12" height="12"><use href="#target"/></svg></button></div></div>
          <div class="row after"><span>Item Image</span><div class="obj none"><em>None (Image)</em><button aria-label="Pick item image"><svg width="12" height="12"><use href="#target"/></svg></button></div></div>
          <div class="row"><label for="val">Value</label><input id="val" class="f" value="0"></div>
          <div class="row"><label for="multi">Multi Select</label><input id="multi" type="checkbox"></div>
          <div class="row after"><label for="alpha">Alpha Fade Speed</label><input id="alpha" class="f" value="0.15"></div>
          <div class="options">
            <h4>Options</h4>
            <ol>
              <li><i class="drag"></i><input class="f" value="Numeric (Points)" aria-label="Option text"><div class="obj none"><em>None (Sprite)</em><button aria-label="Pick sprite"><svg width="12" height="12"><use href="#target"/></svg></button></div><div class="color"><button class="sw white" aria-label="Option color"></button><button class="pick" aria-label="Pick color"><svg width="12" height="12"><use href="#drop"/></svg></button></div></li>
              <li><i class="drag"></i><input class="f" value="Seconds (Time)" aria-label="Option text"><div class="obj none"><em>None (Sprite)</em><button aria-label="Pick sprite"><svg width="12" height="12"><use href="#target"/></svg></button></div><div class="color"><button class="sw white" aria-label="Option color"></button><button class="pick" aria-label="Pick color"><svg width="12" height="12"><use href="#drop"/></svg></button></div></li>
              <li><i class="drag"></i><input class="f" value="Milliseconds (Time)" aria-label="Option text"><div class="obj none"><em>None (Sprite)</em><button aria-label="Pick sprite"><svg width="12" height="12"><use href="#target"/></svg></button></div><div class="color"><button class="sw white" aria-label="Option color"></button><button class="pick" aria-label="Pick color"><svg width="12" height="12"><use href="#drop"/></svg></button></div></li>
            </ol>
            <div class="callout"></div>
          </div>
          <div class="footer"><button aria-label="Add option"><svg width="10" height="10"><path d="M5 0v10M0 5h10" stroke="#d0d0d0" stroke-width="2"/></svg></button><button aria-label="Remove option"><svg width="8" height="10"><path d="M0 5h8" stroke="#d0d0d0" stroke-width="2"/></svg></button></div>
        </div>
      </div>
      <div class="scroll"><svg class="caret up"><use href="#down"/></svg><i class="long"></i><svg class="caret"><use href="#down"/></svg></div>
    </div>
    <div class="preview-bar"><button>DataTypeDropdown<svg class="caret"><use href="#down"/></svg></button><i></i><svg width="4" height="14"><use href="#dots"/></svg></div>
    <div class="preview">
      <svg width="154" height="60" role="img" aria-label="Sprite preview">
        <defs><pattern id="check" x="13" y="-3" width="32" height="32" patternUnits="userSpaceOnUse"><path d="M0 0h32v32H0z" fill="#444"/><path d="M0 0h16v16H0zM16 16h16v16H16z" fill="#636363"/></pattern>
        <linearGradient id="white" x1="0" y1="0" x2="0" y2="1"><stop offset="0" stop-color="#fff"/><stop offset=".14" stop-color="#fff"/><stop offset=".2" stop-color="#f2f2f2"/></linearGradient>
        <filter id="b"><feGaussianBlur stdDeviation="2"/></filter><filter id="edge"><feGaussianBlur stdDeviation="1"/></filter></defs>
        <path d="M0 0h154v60H0z" fill="url(#check)"/>
        <rect x="12" y="12" width="130" height="110" rx="34" fill="#111" filter="url(#b)"/>
        <rect x="14" y="14" width="126" height="110" rx="33" fill="url(#white)" filter="url(#edge)"/>
        <path d="M47.500 0v60M105.500 0v60M0 49.500h154" stroke="#d8d8d8"/><path d="M47.500 0v60M105.500 0v60M0 49.500h154" stroke="#444" stroke-dasharray="8 5"/>
      </svg>
    </div>
  </aside>
</main>
</body>
</html>
```
FILE: styles.css
```css
* { box-sizing: border-box; }
body {
  margin: 0; height: 100vh; overflow: hidden; display: flex; flex-direction: column;
  background: #141414; color: #b8b8b8; border-top: 1px solid #222; border-left: 1px solid #191919;
  font: 12px/16px Inter, "Liberation Sans", sans-serif;
}
button, input, select { font: inherit; color: inherit; margin: 0; padding: 0; border: 0; background: none; min-width: 0; }
ul, ol { list-style: none; margin: 0; padding: 0; }
h1, h2, h3, h4, p { margin: 0; font-size: inherit; font-weight: inherit; }
svg { flex: none; display: block; }
b { font-weight: 600; }
.defs { position: absolute; width: 0; height: 0; }
.caret { width: 8px; height: 8px; color: #c4c4c4; }
.caret.up { transform: rotate(180deg); }

.titlebar, .menubar { background: #fff; color: #000; font: 12px/16px Roboto, "Noto Sans", sans-serif; display: flex; align-items: center; flex: none; }
.titlebar { height: 29px; padding-left: 8px; }
.titlebar h1 { flex: 1; padding-left: 5px; white-space: nowrap; overflow: hidden; }
.titlebar button { width: 45px; height: 29px; display: grid; place-items: center; }
.menubar { height: 21px; padding: 1px 0 0 7px; gap: 14px; border-bottom: 1px solid #eee; }

.topbar { height: 36px; flex: none; display: grid; grid-template-columns: 1fr auto 1fr; align-items: center; padding-left: 8px; background: #141414; }
.top-left, .top-right, .play, .flat, .brand { display: flex; align-items: center; }
.brand { color: #fff; font-weight: 600; gap: 6px; padding-right: 7px; border-right: 1px solid #444; height: 14px; margin-right: -4px; }
.top-left { gap: 17px; }
.flat { gap: 6px; color: #b4b4b4; white-space: nowrap; }
.top-right { justify-content: flex-end; gap: 21px; padding-right: 12px; }
.play { gap: 2px; }
.play button { width: 32px; height: 20px; display: grid; place-items: center; background: #585858; border-radius: 3px; }
.play button:disabled { background: #3a3a3a; }

.editor { flex: 1; min-height: 0; display: grid; grid-template-columns: minmax(0, 1fr) 354px; gap: 2px; }
.work { display: grid; grid-template-rows: 735fr 453fr; gap: 2px; min-height: 0; min-width: 0; }
.upper { display: grid; grid-template-columns: 256px minmax(0, 1fr); gap: 2px; min-height: 0; }
.panel { display: flex; flex-direction: column; min-height: 0; min-width: 0; background: #383838; overflow: hidden; }

.tabs { height: 24px; flex: none; display: flex; background: #141414; }
.tab { display: flex; align-items: center; gap: 4px; padding: 1px 9px 0; border-radius: 3px 3px 0 0; }
.tab.active { background: #3c3c3c; }
.tab.focus { border-top: 2px solid #3a6a94; padding-top: 0; }
.project .tab { padding-left: 8px; }
.project .console { padding-left: 10px; }
.w108 { width: 108px; }
.w94 { width: 94px; }
.w90 { width: 90px; }
.tab-tools { margin-left: auto; display: flex; align-items: center; gap: 9px; padding-right: 11px; }
.inspector .tab-tools { padding-right: 10px; }

.toolbar { height: 21px; flex: none; display: flex; align-items: center; background: #3c3c3c; border-bottom: 1px solid #242424; }
.add { display: flex; flex: none; align-items: center; gap: 3px; padding: 0 13px 0 7px; }
.search { flex: 1; height: 16px; display: flex; align-items: center; gap: 5px; margin-right: 4px; padding: 0 2px 0 4px; background: #2a2a2a; border: 1px solid #1e1e1e; border-radius: 4px; }
.search input { flex: 1; outline: 0; }
.search input::placeholder { color: #6e6e6e; opacity: 1; }
.search.wide { flex: 0 1 318px; margin: 0 2px 0 auto; }
.cell { width: 26px; height: 20px; flex: none; display: flex; align-items: center; justify-content: center; border-left: 1px solid #282828; }
.cell.dim { color: #888; }
.cell.hid { width: 43px; gap: 1px; color: #777; }

.tree li { height: 16px; display: flex; align-items: center; gap: 3px; white-space: nowrap; --d: 0; padding-left: calc(var(--base) + 14px * var(--d)); }
.tree .d1 { --d: 1; } .tree .d2 { --d: 2; } .tree .d3 { --d: 3; } .tree .d4 { --d: 4; }
.tree .d5 { --d: 5; } .tree .d6 { --d: 6; } .tree .d7 { --d: 7; }
.tw { width: 12px; height: 12px; flex: none; }
.ic { width: 14px; height: 14px; color: #c4c4c4; }
.bright { color: #d8d8d8; }
.hierarchy .tree { --base: 32px; flex: 1; background: linear-gradient(90deg, #323232 32px, #383838 32px); }
.hierarchy .root { background: #303030; border-bottom: 1px solid #3f3f3f; }
.hierarchy .end { margin-left: auto; margin-right: 10px; }
.tree .selected { background: #2c5d87; color: #d0d0d0; }
.off { color: #707070; }
.off .ic { color: #6a6a6a; }

.scene-bar { height: 26px; flex: none; display: flex; align-items: center; gap: 4px; padding-left: 6px; background: #3c3c3c; overflow: hidden; }
.grip { width: 4px; height: 16px; flex: none; border: solid #565656; border-width: 0 1px; margin: 0 4px; }
.grip.wide { margin-left: 5px; }
.grip:first-child { margin-left: 0; }
.tb { height: 20px; flex: none; display: flex; align-items: center; justify-content: center; gap: 3px; padding: 0 5px 0 4px; background: #555; border-radius: 2px; }
.tb.on { background: #46607c; }
.tb.w22 { width: 22px; padding: 0; } .tb.w14 { width: 14px; padding: 0; } .tb.w32 { width: 32px; padding: 0; }
.two { color: #e8e8e8; font-weight: 600; font-size: 11px; }
.tb .caret { margin-left: 2px; }
.tb.w14 .caret { margin: 0; }
.pair { display: flex; gap: 1px; flex: none; }
.num { width: 37px; height: 20px; padding-left: 4px; flex: none; background: #2a2a2a; border: 1px solid #1c1c1c; border-radius: 3px; }

.viewport { position: relative; flex: 1; min-height: 0; overflow: hidden; }
.world { position: absolute; inset: 0; }
.heading { font: bold 61px "Liberation Sans", Arial, sans-serif; fill: #cbcbcb; }
.hint { font: italic 34px "Liberation Sans", Arial, sans-serif; fill: #acacac; }
.value { font: 34px "Liberation Sans", Arial, sans-serif; fill: #333; }
.tools, .dock { position: absolute; display: flex; gap: 1px; background: #12161d; border-radius: 3px; color: #c4c4c4; }
.tools { left: 2px; top: 2px; width: 43px; flex-direction: column; padding: 0 3px 4px; }
.tools .bar { height: 4px; margin: 6px 11px 7px; border: solid #666; border-width: 1px 0; }
.tools button, .dock button { height: 20px; display: grid; place-items: center; background: #585858; }
.dock { left: 1px; bottom: 2px; padding: 3px 4px; background: #151515; align-items: center; }
.dock button { width: 32px; }
.dock .grip { margin: 0 6px 0 2px; }
.tools .on, .dock .on { background: #46607c; }

.browser { flex: 1; min-height: 0; display: grid; grid-template-columns: 194px 13px minmax(0, 1fr); }
.folders { overflow: hidden; }
.browser .tree { --base: 2px; }
.folders .last { margin-bottom: 15px; }
.folders .current { background: #4d4d4d; }
.scroll { display: flex; flex-direction: column; align-items: center; padding-top: 4px; background: #353535; min-height: 0; }
.scroll i { flex: 1; width: 10px; margin: 4px 0 0; background: #5f5f5f; border-radius: 5px 5px 0 0; }
.files { background: #333; border-left: 1px solid #222; }
.files h2 { height: 21px; line-height: 19px; padding-left: 4px; background: #3e3e3e; font-weight: 600; }

.insp-scroll { flex: 1; min-height: 0; display: grid; grid-template-columns: minmax(0, 1fr) 11px; overflow: hidden; }
.insp { overflow: hidden; min-height: 0; }
.insp-scroll .scroll { border-left: 1px solid #2c2c2c; }
.insp-scroll .scroll .long { flex: 0 0 81%; border-radius: 5px; }
.insp-scroll .scroll .caret:last-child { margin-top: auto; margin-bottom: 4px; }
.f { flex: 1; width: 100%; height: 18px; padding: 0 2px; background: #2a2a2a; border: 1px solid #202020; border-top-color: #121212; border-radius: 3px; color: #c4c4c4; }
.f:disabled { background: #323232; border-color: #292929; color: #747474; }
.disabled { color: #747474; }
.bold { font-weight: 600; }
input[type="checkbox"] { appearance: none; width: 14px; height: 14px; flex: none; background: #2a2a2a; border: 1px solid #202020; border-radius: 3px; display: grid; place-items: center; }
input[type="checkbox"]:checked::after { content: ""; width: 4px; height: 8px; border: solid #e8e8e8; border-width: 0 2px 2px 0; transform: rotate(42deg) translate(-1px, -1px); }
.sel { position: relative; display: flex; }
.sel.grow { flex: 1; min-width: 0; }
.sel select { appearance: none; width: 100%; height: 17px; padding-left: 3px; background: #515151; border: 1px solid #303030; border-radius: 3px; line-height: 15px; color: #d0d0d0; }
.sel::after { content: ""; position: absolute; right: 5px; top: 7px; border: solid transparent; border-width: 4px 4px 0; border-top-color: #c4c4c4; }

.object { display: grid; grid-template-columns: 35px minmax(0, 1fr); grid-template-rows: 24px 24px; padding: 6px 4px 5px 5px; align-items: center; }
.big { grid-row: 1 / 3; align-self: start; }
.object-name, .object-tag { display: flex; align-items: center; }
.object-name { gap: 4px; padding: 0 2px 0 5px; }
.object-name > .f { margin-left: 1px; }
.static { display: flex; align-items: center; gap: 3px; }
.object-name > .caret { margin-left: 8px; }
.object-tag .sel:first-of-type { width: 118px; margin-left: 3px; }
.layer { margin: 0 3px 0 14px; }
.comp { height: 22px; display: flex; align-items: center; gap: 8px; padding: 0 11px 0 4px; background: #3e3e3e; border-top: 1px solid #1c1c1c; }
.comp.open { border-bottom: 1px solid #2e2e2e; }
.comp svg:last-child { margin-left: 4px; }
.cic { margin-left: -4px; color: #c4c4c4; }
.chk { width: 16px; margin-left: -4px; display: flex; }
.comp h3 { flex: 1; margin-left: -4px; font-weight: 600; color: #c4c4c4; white-space: nowrap; }

.body { padding: 4px 4px 0 19px; }
.rect { padding-bottom: 8px; }
.note { height: 18px; padding: 0 3px; font-size: 11px; border: 1px solid #282828; border-radius: 3px; background: #404040; color: #aaa; }
.placement { display: grid; grid-template-columns: 119px minmax(0, 1fr); margin-top: 5px; }
.cells { display: grid; grid-template-columns: repeat(3, minmax(0, 1fr)); gap: 0 2px; grid-template-rows: 17px 19px 17px 18px; }
.cells label { padding-left: 1px; }
.anchor { display: grid; grid-template-columns: 8px 36px; grid-template-rows: 16px 36px; justify-content: start; align-content: start; row-gap: 5px; font-size: 11px; justify-items: center; }
.anchor span:first-child { grid-column: 2; }
.anchor .side { writing-mode: vertical-rl; transform: rotate(180deg); margin-right: 16px; }
.modes { display: flex; gap: 1px; justify-content: flex-end; padding-right: 1px; }
.modes button { width: 25px; height: 18px; display: grid; place-items: center; background: #505050; color: #8a8a8a; font-size: 11px; }
.sub { height: 16px; margin-top: 3px; display: flex; align-items: center; gap: 2px; margin-left: -14px; }
.row { height: 20px; display: grid; grid-template-columns: 122px minmax(0, 1fr); align-items: center; white-space: nowrap; }
.row > :first-child { color: #b0b0b0; }
.row.in > :first-child { padding-left: 15px; }
.row.after { margin-bottom: 8px; }
.xyz { grid-template-columns: 117px repeat(3, minmax(0, 1fr)); column-gap: 2px; }
.xyz label { display: grid; grid-template-columns: 14px minmax(0, 1fr); padding-left: 4px; align-items: center; }
.xyz.near label { grid-template-columns: 12px minmax(0, 1fr); padding-left: 0; }
.pivot { margin: 2px 0 8px; }
.link { display: flex; align-items: center; justify-content: space-between; padding-right: 3px; }
.obj, .color { height: 18px; display: flex; align-items: center; background: #2a2a2a; border: 1px solid #202020; border-radius: 3px; color: #c4c4c4; overflow: hidden; min-width: 0; }
.obj { padding-left: 2px; }
.obj.none { color: #858585; padding-left: 2px; }
.obj em { flex: 1; font-style: normal; white-space: nowrap; overflow: hidden; padding-left: 1px; }
.obj.none em { padding-left: 0; }
.obj button, .pick { width: 18px; height: 16px; flex: none; display: grid; place-items: center; background: #383838; }
.sw { flex: 1; height: 16px; border-bottom: 3px solid #fff; }
.white { background: #fff; } .light { background: #f4f4f4; } .gray { background: #c8c8c8; }
.half { border-bottom: 0; background: linear-gradient(#c8c8c8, #c8c8c8) 0 0 / 100% 13px no-repeat, linear-gradient(90deg, #fff 50%, #000 50%); }
.row:has([type="range"]) { grid-template-columns: 122px minmax(0, 1fr) 50px; column-gap: 0; }
input[type="range"] { appearance: none; height: 16px; margin-right: 5px; background: linear-gradient(#5e5e5e, #5e5e5e) 0 7px / 100% 2px no-repeat; }
input[type="range"]::-webkit-slider-thumb { appearance: none; width: 10px; height: 10px; border-radius: 50%; background: #999; }
.vis { height: 24px; margin-bottom: 6px; grid-template-columns: 1fr; padding-left: 121px; }
.row .visualize { height: 17px; line-height: 17px; background: #585858; border-radius: 3px; color: #e0e0e0; }
.options { position: relative; margin-top: 1px; border: 1px solid #242424; border-radius: 3px 3px 0 0; background: #414141; }
.options h4 { height: 20px; padding: 2px 6px; background: #353535; border-bottom: 1px solid #242424; }
.options ol { padding: 5px 6px 0 4px; }
.options li { display: grid; grid-template-columns: 10px minmax(0, 1fr); gap: 2px 5px; margin-bottom: 5px; }
.options li > * { grid-column: 2; }
.options li .drag { grid-column: 1; height: 4px; margin-top: 7px; border: solid #666; border-width: 1px 0; }
.callout { position: absolute; inset: -9px -4px -8px -12px; border: 6px solid #ff4136; border-radius: 10px; pointer-events: none; }
.footer { width: 57px; height: 20px; margin: 0 11px 0 auto; display: flex; justify-content: center; gap: 15px; padding-top: 4px; background: #414141; border: solid #242424; border-width: 0 1px; }
.footer button { display: grid; align-items: start; }

.preview-bar { height: 22px; flex: none; display: flex; align-items: center; padding: 0 4px; background: #3c3c3c; border: solid #222; border-width: 1px 0; }
.preview-bar button { display: flex; align-items: center; gap: 3px; height: 20px; padding: 0 4px 0 3px; font-weight: 600; color: #c4c4c4; border: solid #242424; border-width: 0 1px; }
.preview-bar i { flex: 1; height: 4px; margin: 0 6px 0 4px; border: solid #606060; border-width: 1px 0; }
.preview { height: 60px; flex: none; background: #303030; display: flex; justify-content: center; overflow: hidden; padding-left: 2px; }
```
